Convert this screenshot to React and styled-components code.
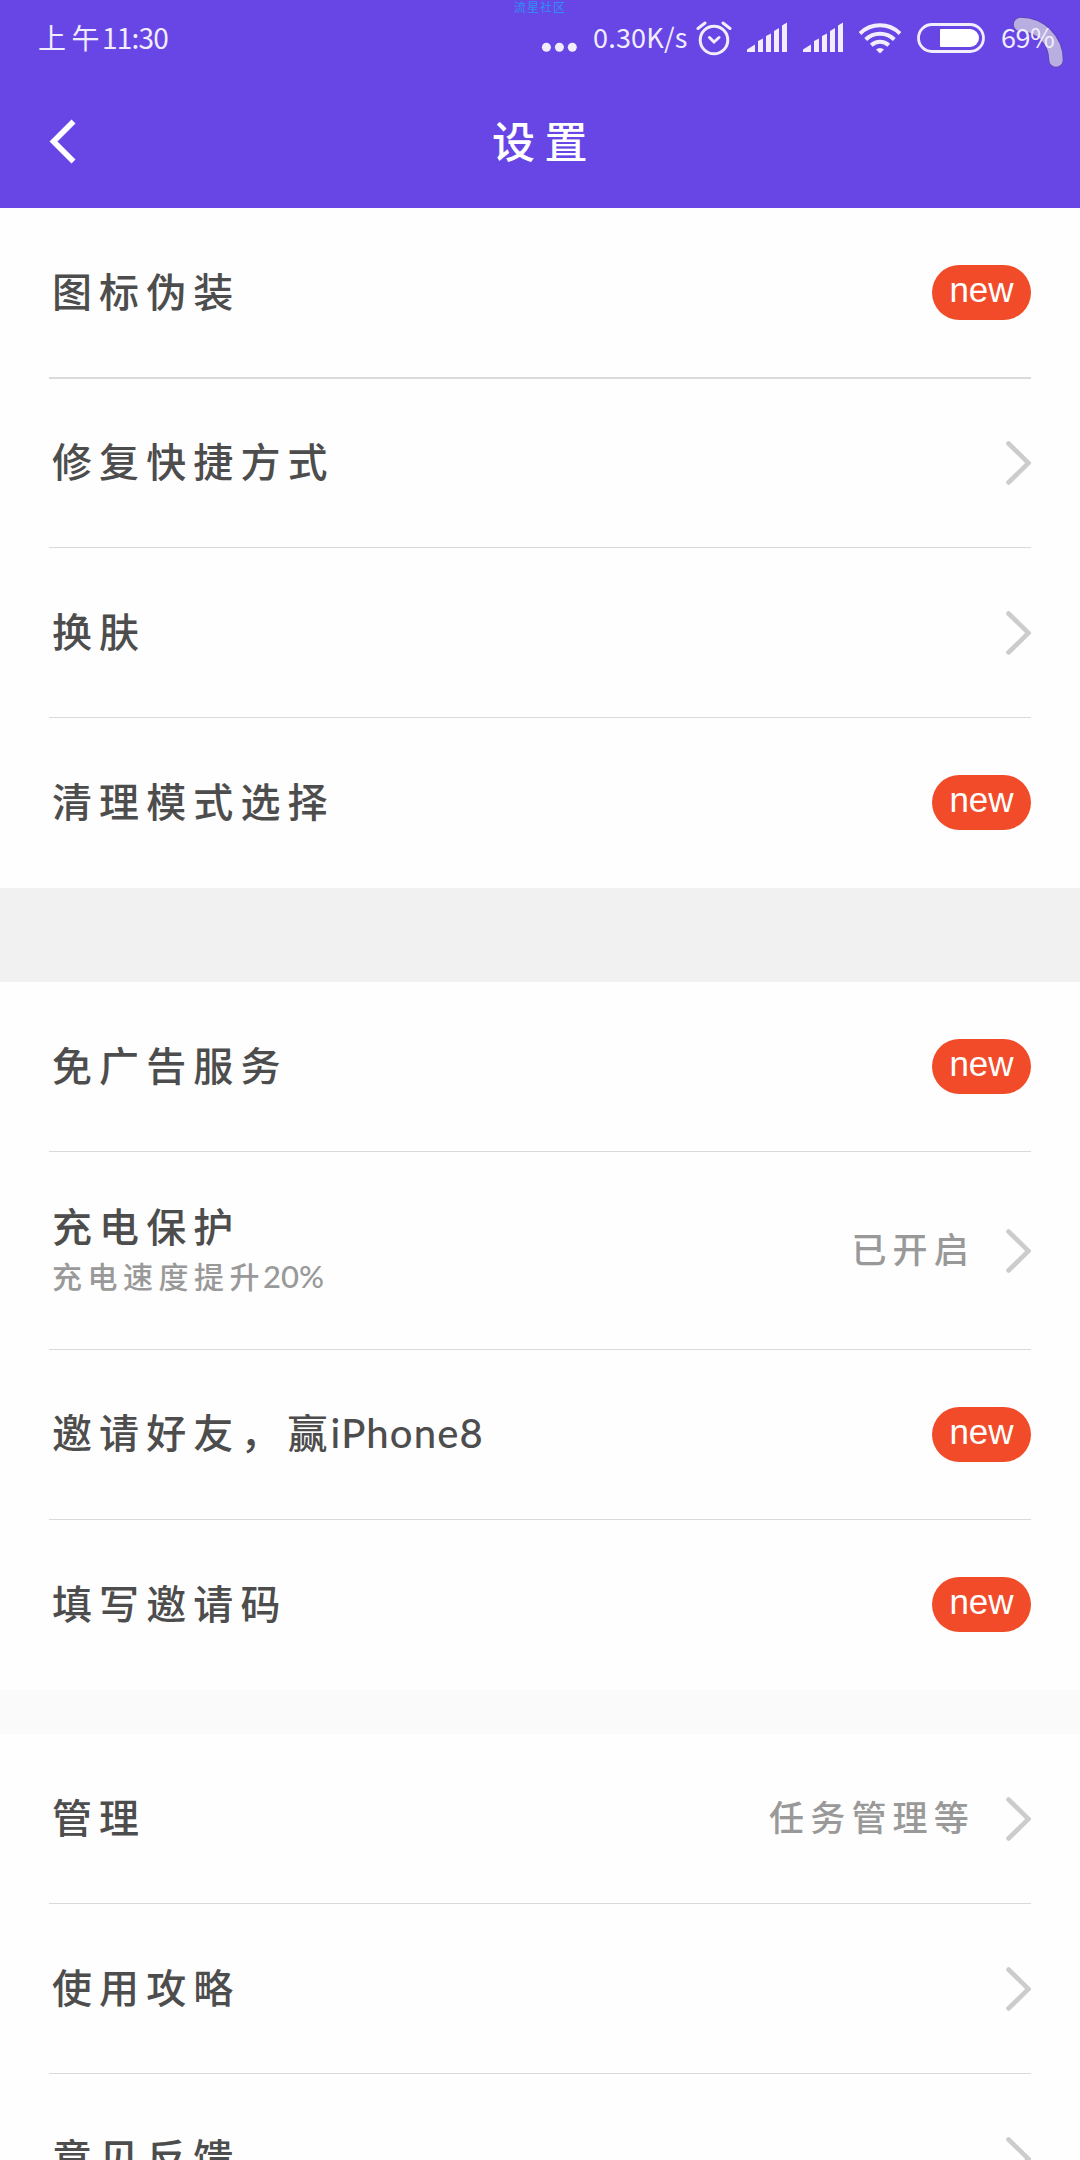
import React from 'react';
import styled, { createGlobalStyle } from 'styled-components';

const GlobalStyle = createGlobalStyle`
  *, *::before, *::after { box-sizing: border-box; }
  html, body { margin: 0; padding: 0; background: #fefefe; }
  body { height: 2160px; overflow: hidden; }
`;

const Screen = styled.div`
  position: relative;
  width: 1080px;
  height: 2160px;
  overflow: hidden;
  background: #fefefe;
  color: #4d4d4d;
  font-family: 'Noto Sans CJK SC', sans-serif;
`;

const Header = styled.header`
  height: 208px;
  background: #6846e6;
  color: #fff;
`;

const StatusBar = styled.div`
  position: relative;
  z-index: 1;
  display: flex;
  align-items: center;
  height: 76px;
  padding-left: 38px;
  color: #f1edfd;
`;

const StatusText = styled.span`
  flex: none;
  width: ${(p) => p.$width}px;
  margin-left: ${(p) => p.$gap || 0}px;
  font-size: ${(p) => p.$size || 28}px;
  letter-spacing: ${(p) => p.$spacing || 0}px;
  font-weight: ${(p) => p.$weight || 400};
  line-height: 74px;
  height: 76px;
  white-space: nowrap;
`;

const Meridiem = styled.span`
  margin-right: -3px;
  letter-spacing: 5.5px;
`;

const StatusIcon = styled.svg`
  flex: none;
  display: block;
  height: 76px;
  width: ${(p) => p.$width}px;
  margin-left: ${(p) => p.$gap}px;
`;

const Watermark = styled.span`
  position: absolute;
  top: 0;
  left: 514px;
  font-size: 12px;
  letter-spacing: 1px;
  line-height: 13px;
  color: #2f8ff5;
`;

const CornerArc = styled.svg`
  position: absolute;
  top: 12px;
  left: 1008px;
`;

const TitleBar = styled.div`
  display: grid;
  grid-template-columns: 120px 1fr 120px;
  align-items: center;
  height: 132px;
`;

const BackButton = styled.button`
  display: flex;
  align-items: center;
  height: 132px;
  padding: 0 0 0 49px;
  border: 0;
  background: none;
`;

const Title = styled.h1`
  margin: 0 0 6px 9px;
  font-size: 43px;
  font-weight: 500;
  letter-spacing: 9.5px;
  line-height: 64px;
  text-align: center;
`;

const Row = styled.div`
  display: flex;
  align-items: center;
  height: ${(p) => p.$height || 170}px;
  margin: 0 49px;
  border-bottom: ${(p) => p.$line || 1}px solid ${(p) => (p.$last ? 'transparent' : '#dadada')};
`;

const Copy = styled.div`
  flex: 1;
  padding: 0 0 ${(p) => (p.$double ? 3 : 6)}px 3px;
`;

const Label = styled.div`
  font-size: 40px;
  font-weight: 500;
  letter-spacing: 7.1px;
  line-height: 52px;
  white-space: nowrap;
`;

const Latin = styled.span`
  margin-left: ${(p) => p.$shift}px;
  font-family: Lato, sans-serif;
  font-size: ${(p) => p.$size}px;
  letter-spacing: ${(p) => p.$spacing || 0}px;
`;

const Hint = styled.div`
  margin-top: 1px;
  font-size: 30px;
  font-weight: 500;
  letter-spacing: 5.5px;
  line-height: 46px;
  color: #999;
  white-space: nowrap;
`;

const Value = styled.span`
  margin: 0 31px 5px 0;
  font-size: 35px;
  font-weight: 500;
  letter-spacing: 6.2px;
  line-height: 50px;
  color: #999;
`;

const Badge = styled.span`
  display: flex;
  justify-content: center;
  width: 99px;
  height: 55px;
  border-radius: 27.5px;
  background: #f24b29;
  color: #fff;
  font-family: 'Liberation Sans', Arial, sans-serif;
  font-size: 35px;
  line-height: 49px;
`;

const Gap = styled.div`
  height: ${(p) => p.$height}px;
  background: ${(p) => p.$color};
`;

const Chevron = () => (
  <svg width="25" height="44" viewBox="0 0 25 44" fill="none">
    <path d="M2.500 2.500 22.500 22 2.500 41.500" stroke="#ccc" strokeWidth="4.600" strokeLinecap="round" />
  </svg>
);

const Signal = ({ gap }) => (
  <StatusIcon $width={40} $gap={gap} viewBox="0 0 40 76" fill="currentColor">
    <path d="M0 52v-2.500L8 44.500V52ZM11 52V41l5-2.500V52ZM19 52V36l5-2.500V52ZM27 52V31l5-3V52ZM35 52V25.500l5-3V52Z" />
  </StatusIcon>
);

const Item = ({ label, latin, hint, hintLatin, value, isNew, height, line, last }) => (
  <Row $height={height} $line={line} $last={last}>
    <Copy $double={Boolean(hint)}>
      <Label>
        {label}
        {latin && <Latin $size={40} $spacing={1.1} $shift={-4}>{latin}</Latin>}
      </Label>
      {hint && (
        <Hint>
          {hint}
          <Latin $size={31} $shift={-2}>{hintLatin}</Latin>
        </Hint>
      )}
    </Copy>
    {value && <Value>{value}</Value>}
    {isNew ? <Badge>new</Badge> : <Chevron />}
  </Row>
);

export default function App() {
  return (
    <Screen>
      <GlobalStyle />
      <Header>
        <CornerArc width="60" height="60" viewBox="0 0 60 60" fill="none" strokeLinecap="round">
          <path d="M12.500 12.500C32 12.500 48 28 48 48" stroke="#5a45a8" strokeOpacity=".7" strokeWidth="15.500" />
          <path d="M12.500 12.500C32 12.500 48 28 48 48" stroke="#b9aee0" strokeWidth="13.500" />
        </CornerArc>
        <StatusBar>
          <StatusText $width={130} $spacing={-0.8}>
            <Meridiem>上午</Meridiem>11:30
          </StatusText>
          <StatusIcon $width={36} $gap={373} viewBox="0 0 36 76" fill="currentColor">
            <circle cx="5.400" cy="47.300" r="4.500" />
            <circle cx="18.400" cy="47.300" r="4.500" />
            <circle cx="31.300" cy="47.300" r="4.500" />
          </StatusIcon>
          <StatusText $width={94} $gap={16} $size={27} $spacing={0.2}>0.30K/s</StatusText>
          <StatusIcon $width={36} $gap={9} viewBox="0 0 36 76" fill="none" stroke="currentColor" strokeWidth="3" strokeLinecap="round">
            <circle cx="18" cy="40" r="13.800" />
            <path d="m13.500 37.500 4.500 4.500 5-4.500M2 28.500l7-5.500M34 28.500 27 23" />
          </StatusIcon>
          <Signal gap={15} />
          <Signal gap={16} />
          <StatusIcon $width={42} $gap={16} viewBox="0 0 42 76" fill="none" stroke="currentColor" strokeWidth="4">
            <path d="M1 33.500a28.500 28.500 0 0 1 40 0M6.700 39.500a20.500 20.500 0 0 1 28.600 0M12.300 45.200a12.500 12.500 0 0 1 17.400 0" />
            <path d="M17 49.500a5.800 5.800 0 0 1 8 0L21 53.500Z" fill="currentColor" stroke="none" />
          </StatusIcon>
          <StatusIcon $width={68} $gap={16} viewBox="0 0 68 76">
            <rect x="1.500" y="24.500" width="65" height="27" rx="13.500" fill="none" stroke="currentColor" strokeWidth="2.800" />
            <path d="M24 29h29a9 9 0 0 1 0 18H24a1 1 0 0 1-1-1V30a1 1 0 0 1 1-1Z" fill="#fff" />
          </StatusIcon>
          <StatusText $width={54} $gap={16} $size={27} $spacing={-0.5}>69%</StatusText>
        </StatusBar>
        <TitleBar>
          <BackButton aria-label="返回">
            <svg width="28" height="46" viewBox="0 0 28 46" fill="none">
              <path d="M24.500 2.500 4.500 22.500l20 20" stroke="#fff" strokeWidth="5.600" />
            </svg>
          </BackButton>
          <Title>设置</Title>
        </TitleBar>
      </Header>

      <Item label="图标伪装" isNew height={171} line={2} />
      <Item label="修复快捷方式" height={169} />
      <Item label="换肤" />
      <Item label="清理模式选择" isNew last />
      <Gap $height={94} $color="#f1f1f1" />
      <Item label="免广告服务" isNew />
      <Item label="充电保护" hint="充电速度提升" hintLatin="20%" value="已开启" height={198} />
      <Item label="邀请好友，赢" latin="iPhone8" isNew />
      <Item label="填写邀请码" isNew last />
      <Gap $height={44} $color="#fafafa" />
      <Item label="管理" value="任务管理等" />
      <Item label="使用攻略" />
      <Item label="意见反馈" />

      <Watermark>流星社区</Watermark>
    </Screen>
  );
}
